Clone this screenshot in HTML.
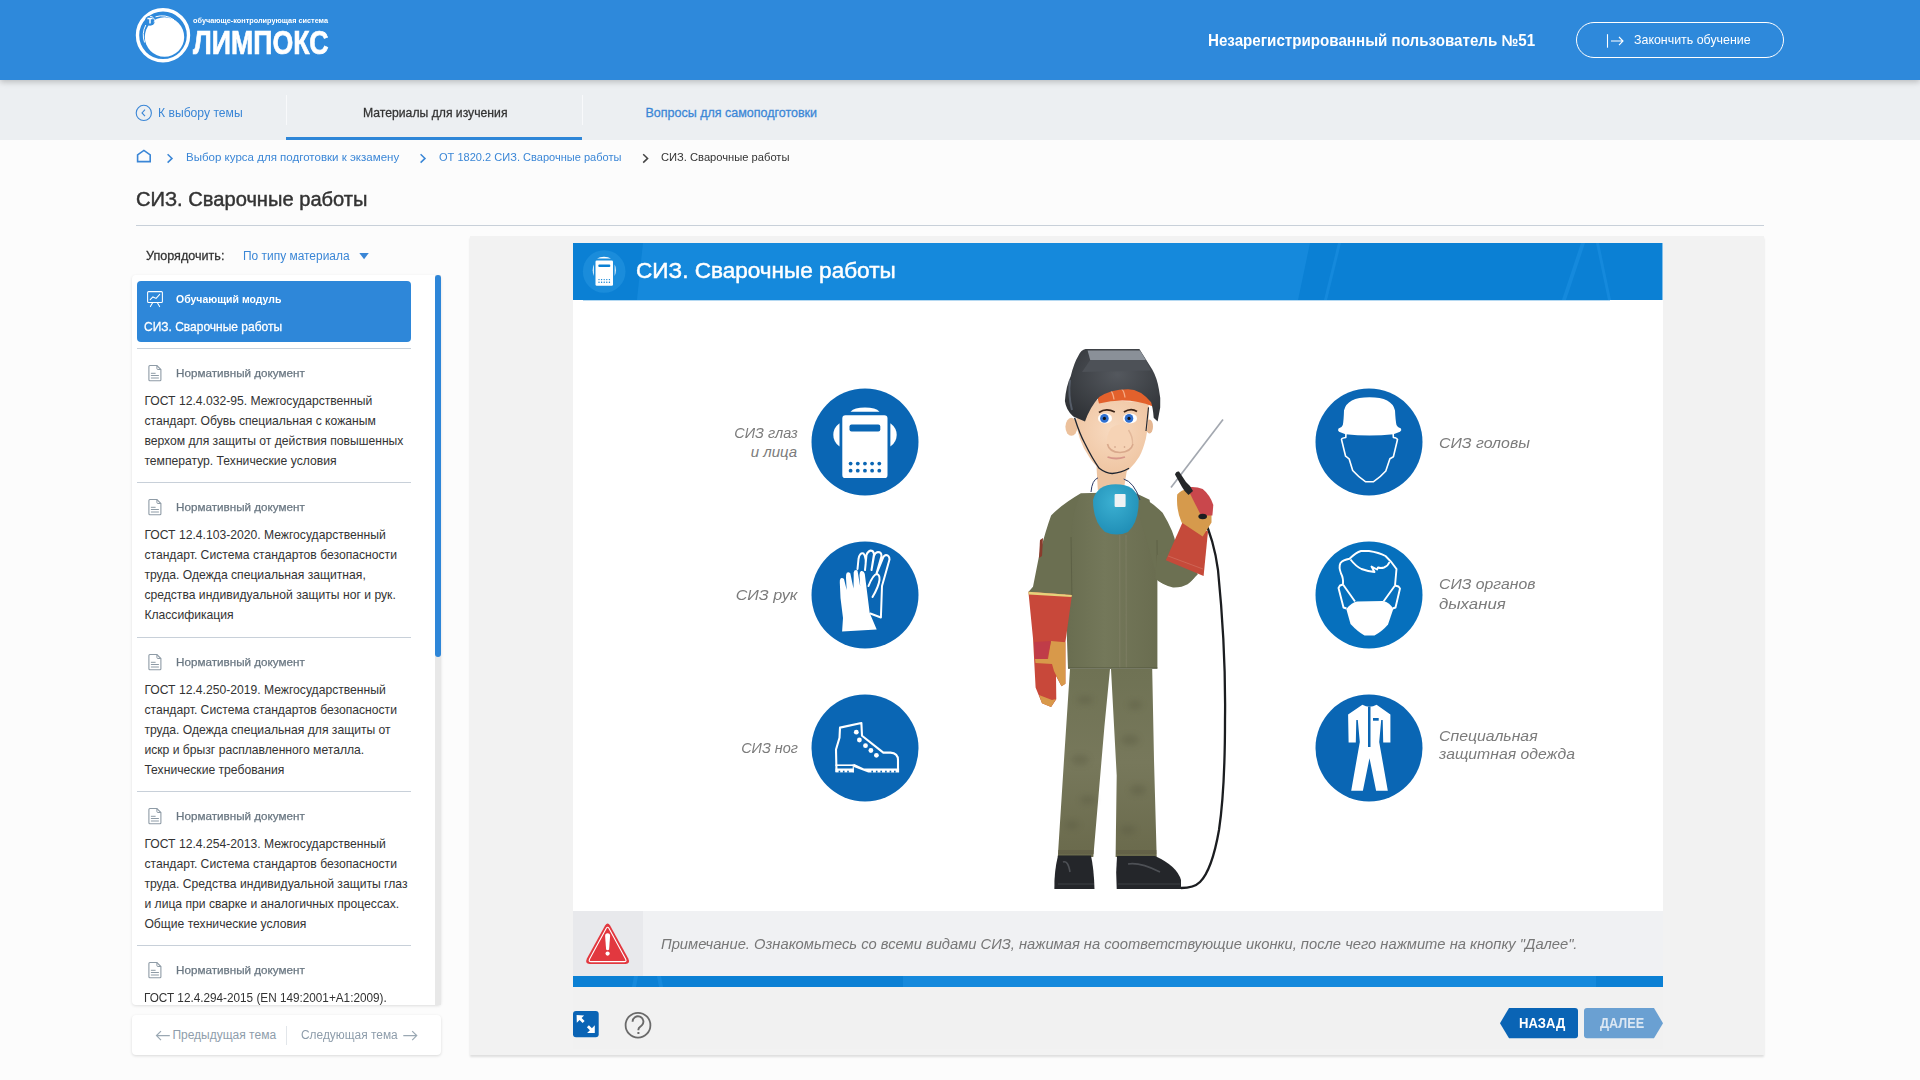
<!DOCTYPE html>
<html><head><meta charset="utf-8"><title>СИЗ. Сварочные работы</title>
<style>
html,body{margin:0;padding:0;}
body{width:1920px;height:1080px;position:relative;overflow:hidden;background:#fcfcfc;font-family:"Liberation Sans",sans-serif;}
.t{position:absolute;white-space:nowrap;z-index:5;}
.a{position:absolute;}
svg{position:absolute;overflow:visible;}
</style></head><body>
<div class=a style="left:0px;top:0px;width:1920px;height:80px;background:#2e89db;box-shadow:0 2px 6px rgba(0,0,0,.22);z-index:2"></div>
<div class=a style="left:0px;top:80px;width:1920px;height:60px;background:#eceff2;"></div>
<div class=a style="left:286px;top:95px;width:1px;height:30px;background:#f8f9fb;"></div>
<div class=a style="left:582px;top:95px;width:1px;height:30px;background:#f8f9fb;"></div>
<div class=a style="left:286px;top:137px;width:296px;height:3px;background:#2e86d8;"></div>
<svg style="left:130px;top:0px;z-index:3" width="70" height="80" viewBox="130 0 70 80">
<circle cx="163" cy="35.3" r="25.5" fill="none" stroke="#fff" stroke-width="3.4"/>
<circle cx="164.5" cy="37" r="19.7" fill="#fff"/>
<path d="M144.6 42.5 A21.8 21.8 0 0 1 145.8 25" fill="none" stroke="#fff" stroke-width="1"/>
<path d="M155.5 16.8 A21.5 21.5 0 0 1 174 19.8" fill="none" stroke="#fff" stroke-width="1"/>
<circle cx="150" cy="20.8" r="5" fill="#2e89db"/>
<path d="M150 16.3 A4.5 4.5 0 0 1 154.2 22.5" fill="none" stroke="#fff" stroke-width=".9"/>
<path d="M147.4 18.4h5.2M150 18.4v5" stroke="#fff" stroke-width="1.5"/>
</svg>
<div class=a style="left:1576px;top:22px;width:206px;height:34px;border:1.3px solid #fff;border-radius:18px;z-index:3"></div>
<svg style="left:1600px;top:30px;z-index:3" width="30" height="20" viewBox="1600 30 30 20">
<path d="M1607.5 34.2v13.5" stroke="#fff" stroke-width="1.1"/>
<path d="M1611 41h12M1619 37l4 4-4 4.2" fill="none" stroke="#fff" stroke-width="1.1"/>
</svg>
<svg style="left:130px;top:100px" width="30" height="30" viewBox="130 100 30 30">
<circle cx="143.8" cy="112.9" r="7.6" fill="none" stroke="#3a86d6" stroke-width="1.1"/>
<path d="M145 109.6l-3 3.3 3 3.3" fill="none" stroke="#3a86d6" stroke-width="1.1"/>
</svg>
<svg style="left:130px;top:140px" width="540" height="30" viewBox="130 140 540 30">
<path d="M137.6 161.6v-6.8l6.3-4.4 6.3 4.4v6.8z" fill="none" stroke="#3a86d6" stroke-width="1.6" stroke-linejoin="miter"/>
<path d="M167.6 154.2l4.4 4.2-4.4 4.2" fill="none" stroke="#3a86d6" stroke-width="1.5"/>
<path d="M420.6 154.2l4.4 4.2-4.4 4.2" fill="none" stroke="#3a86d6" stroke-width="1.5"/>
<path d="M643.2 154.2l4.4 4.2-4.4 4.2" fill="none" stroke="#444" stroke-width="1.5"/>
</svg>
<div class=a style="left:136px;top:225px;width:1628px;height:1px;background:#c8d0d9;"></div>
<svg style="left:355px;top:250px" width="20" height="12" viewBox="355 250 20 12">
<path d="M359.3 252.9h9.5l-4.75 6.4z" fill="#3a86d6"/></svg>
<div class=a style="left:132px;top:275px;width:309px;height:730px;background:#fff;border-radius:4px;box-shadow:0 1px 3px rgba(0,0,0,.12)"></div>
<div class=a style="left:435px;top:275px;width:6px;height:730px;background:#e8e8e8;"></div>
<div class=a style="left:435px;top:275px;width:6px;height:382px;background:#2e86d8;border-radius:3px"></div>
<div class=a style="left:137px;top:281px;width:274px;height:61px;background:#2e87d9;border-radius:4px"></div>
<div class=a style="left:137px;top:348px;width:274px;height:1px;background:#c8d0d9;"></div>
<div class=a style="left:137px;top:482px;width:274px;height:1px;background:#c8d0d9;"></div>
<div class=a style="left:137px;top:637px;width:274px;height:1px;background:#c8d0d9;"></div>
<div class=a style="left:137px;top:791px;width:274px;height:1px;background:#c8d0d9;"></div>
<div class=a style="left:137px;top:945px;width:274px;height:1px;background:#c8d0d9;"></div>
<svg style="left:140px;top:285px" width="30" height="30" viewBox="140 285 30 30">
<rect x="147.6" y="291.6" width="14.8" height="10.9" rx="1" fill="none" stroke="#fff" stroke-width="1.05"/>
<path d="M150.2 299.7l2.7-2.8 3.2 1.5 3.6-4" fill="none" stroke="#fff" stroke-width="1.05" stroke-linecap="round"/>
<path d="M152.6 302.8l-2.2 3.8M157.4 302.8l2.2 3.8" stroke="#fff" stroke-width="1.05" stroke-linecap="round"/>
</svg>
<svg style="left:146px;top:363px" width="20" height="20" viewBox="146 363 20 20">
<path d="M149.9 365.5h7l4 4v10.2a1 1 0 0 1-1 1h-10a1 1 0 0 1-1-1v-13.2a1 1 0 0 1 1-1z" fill="none" stroke="#8e9ba6" stroke-width="1.1"/>
<path d="M156.9 365.5v3a1 1 0 0 0 1 1h3" fill="none" stroke="#8e9ba6" stroke-width="1"/>
<path d="M150.9 373.3h4.7M150.9 375.5h8M150.9 378h8" stroke="#8e9ba6" stroke-width="1"/>
</svg>
<svg style="left:146px;top:497px" width="20" height="20" viewBox="146 497 20 20">
<path d="M149.9 499.5h7l4 4v10.2a1 1 0 0 1-1 1h-10a1 1 0 0 1-1-1v-13.2a1 1 0 0 1 1-1z" fill="none" stroke="#8e9ba6" stroke-width="1.1"/>
<path d="M156.9 499.5v3a1 1 0 0 0 1 1h3" fill="none" stroke="#8e9ba6" stroke-width="1"/>
<path d="M150.9 507.3h4.7M150.9 509.5h8M150.9 512h8" stroke="#8e9ba6" stroke-width="1"/>
</svg>
<svg style="left:146px;top:652px" width="20" height="20" viewBox="146 652 20 20">
<path d="M149.9 654.5h7l4 4v10.2a1 1 0 0 1-1 1h-10a1 1 0 0 1-1-1v-13.2a1 1 0 0 1 1-1z" fill="none" stroke="#8e9ba6" stroke-width="1.1"/>
<path d="M156.9 654.5v3a1 1 0 0 0 1 1h3" fill="none" stroke="#8e9ba6" stroke-width="1"/>
<path d="M150.9 662.3h4.7M150.9 664.5h8M150.9 667h8" stroke="#8e9ba6" stroke-width="1"/>
</svg>
<svg style="left:146px;top:806px" width="20" height="20" viewBox="146 806 20 20">
<path d="M149.9 808.5h7l4 4v10.2a1 1 0 0 1-1 1h-10a1 1 0 0 1-1-1v-13.2a1 1 0 0 1 1-1z" fill="none" stroke="#8e9ba6" stroke-width="1.1"/>
<path d="M156.9 808.5v3a1 1 0 0 0 1 1h3" fill="none" stroke="#8e9ba6" stroke-width="1"/>
<path d="M150.9 816.3h4.7M150.9 818.5h8M150.9 821h8" stroke="#8e9ba6" stroke-width="1"/>
</svg>
<svg style="left:146px;top:960px" width="20" height="20" viewBox="146 960 20 20">
<path d="M149.9 962.5h7l4 4v10.2a1 1 0 0 1-1 1h-10a1 1 0 0 1-1-1v-13.2a1 1 0 0 1 1-1z" fill="none" stroke="#8e9ba6" stroke-width="1.1"/>
<path d="M156.9 962.5v3a1 1 0 0 0 1 1h3" fill="none" stroke="#8e9ba6" stroke-width="1"/>
<path d="M150.9 970.3h4.7M150.9 972.5h8M150.9 975h8" stroke="#8e9ba6" stroke-width="1"/>
</svg>
<div class=a style="left:132px;top:1015px;width:309px;height:40px;background:#fff;border-radius:4px;box-shadow:0 1px 3px rgba(0,0,0,.14)"></div>
<div class=a style="left:286px;top:1026px;width:1px;height:19px;background:#e2e6ea;"></div>
<svg style="left:150px;top:1025px" width="280" height="20" viewBox="150 1025 280 20">
<path d="M169.8 1035.6h-13.3M161 1031.1l-4.5 4.5 4.5 4.5" fill="none" stroke="#9aa8b3" stroke-width="1.2"/>
<path d="M403.3 1035.6h13.3M412.2 1031.1l4.5 4.5-4.5 4.5" fill="none" stroke="#9aa8b3" stroke-width="1.2"/>
</svg>
<div class=a style="left:470px;top:236px;width:1294px;height:819px;background:#f2f2f2;box-shadow:0 2px 2px rgba(0,0,0,.12)"></div>
<div class=a style="left:573px;top:243px;width:1090px;height:668px;background:#fff;"></div>
<svg style="left:573px;top:242px" width="1090" height="58" viewBox="573 242 1090 58">
<rect x="573" y="243" width="1089.5" height="57" fill="#0b80d4"/>
<path d="M643 243L1310 243L1298 300L637 300z" fill="#1589dc"/>
<path d="M1338 243l3 0-14 57-3 0z" fill="#1589dc"/>
<path d="M1581 243l4 0-19 57-4 0z" fill="#1589dc"/>
<path d="M1596 243l3 0 12 57-3 0z" fill="#1589dc"/>
<circle cx="604.2" cy="271.5" r="21.3" fill="#1a8cdb"/>
<g fill="#fff">
<path d="M597 258.5a9 5 0 0 1 14 0z"/>
<rect x="595.5" y="260.5" width="17.5" height="25.3" rx="1.3"/>
<path d="M593.8 264.5a3 7.5 0 0 0 0 11.5z"/>
<path d="M614.7 264.5a3 7.5 0 0 1 0 11.5z"/>
</g>
<rect x="598.3" y="264.5" width="12" height="2.6" rx="1" fill="#0b80d4"/>
<g fill="#0b80d4">
<circle cx="599" cy="279.6" r=".7"/><circle cx="601.6" cy="279.6" r=".7"/><circle cx="604.2" cy="279.6" r=".7"/><circle cx="606.8" cy="279.6" r=".7"/><circle cx="609.4" cy="279.6" r=".7"/>
<circle cx="599" cy="282.3" r=".7"/><circle cx="601.6" cy="282.3" r=".7"/><circle cx="604.2" cy="282.3" r=".7"/><circle cx="606.8" cy="282.3" r=".7"/><circle cx="609.4" cy="282.3" r=".7"/>
</g>
</svg>
<div class=a style="left:583px;top:300px;width:1027px;height:1px;background:#b5d9f2;"></div>
<div class=a style="left:573px;top:911px;width:1090px;height:65px;background:#f0f1f3;"></div>
<div class=a style="left:573px;top:911px;width:70px;height:65px;background:#e8e9ec;"></div>
<svg style="left:580px;top:915px" width="60" height="55" viewBox="580 915 60 55">
<path d="M605.1 925.4 Q607.6 921.6 610.1 925.4 L628.3 958.6 Q630.6 963.9 625.6 963.9 L589.6 963.9 Q584.6 963.9 586.9 958.6z" fill="#e2383f"/>
<path d="M606.3 928.2 Q607.6 926.2 608.9 928.2 L625.6 958.9 Q626.9 961.6 624.2 961.6 L591 961.6 Q588.3 961.6 589.6 958.9z" fill="none" stroke="#fff" stroke-width="1.1"/>
<path d="M610.1 936 Q610.1 933.2 607.6 933.2 Q605.1 933.2 605.1 936 L606.1 949.5 Q607.6 951 609.1 949.5z" fill="#fff"/>
<circle cx="607.6" cy="953.6" r="2.1" fill="#fff"/>
</svg>
<svg style="left:573px;top:976px" width="1090" height="11" viewBox="573 976 1090 11">
<rect x="573" y="976" width="1090" height="11" fill="#0b80d4"/>
<rect x="903" y="976" width="693" height="11" fill="#1589dc"/>
<path d="M634 976h4l-2 11h-4zM657 976h4l2 11h-4z" fill="#1589dc"/>
</svg>
<div class=a style="left:573px;top:987px;width:1090px;height:62px;background:#f1f1f1;"></div>
<svg style="left:573px;top:1011px" width="26" height="27" viewBox="573 1011 26 27">
<rect x="573" y="1011" width="25.7" height="26.2" rx="3" fill="#0a64b5"/>
<path d="M576.6 1015.1 L584.1 1015.5 L581.6 1018 L584.6 1021 L582.6 1023 L579.6 1020 L576.8 1022.8z" fill="#fff"/>
<path d="M594.8 1025.2 L594.8 1033.1 L587.1 1032.9 L589.9 1030.3 L586.9 1027.3 L588.9 1025.3 L591.9 1028.3z" fill="#fff"/>
</svg>
<svg style="left:620px;top:1008px" width="36" height="36" viewBox="620 1008 36 36">
<circle cx="638" cy="1025.2" r="12.4" fill="none" stroke="#6a6a6a" stroke-width="1.8"/>
<path d="M632.6 1021.8 a5.4 5.3 0 1 1 9.2 3.6 c-1.5 1.4 -3.4 1.9 -3.4 4 v0.8" fill="none" stroke="#6a6a6a" stroke-width="1.9"/>
<rect x="637.4" y="1032" width="2" height="2" fill="#6a6a6a"/>
</svg>
<svg style="left:1495px;top:1004px" width="175" height="40" viewBox="1495 1004 175 40">
<path d="M1509 1008 H1575 Q1578 1008 1578 1011 V1035.3 Q1578 1038.3 1575 1038.3 H1509 L1500 1023.2z" fill="#0a64b5"/>
<path d="M1587 1008 H1654 L1663 1023.2 L1654 1038.3 H1587 Q1584 1038.3 1584 1035.3 V1011 Q1584 1008 1587 1008z" fill="#6aa0d2"/>
</svg>
<svg style="left:810px;top:386.5px" width="110" height="110" viewBox="0 0 110 110"><circle cx="55" cy="55" r="53.5" fill="#0a66b4"/><g fill="#fff">
<path d="M40.5 24.8a15.5 6.5 0 0 1 29 0z"/>
<rect x="32.3" y="28.2" width="45.2" height="62.9" rx="3.2"/>
<path d="M29.5 36.3 Q23.3 41 23.3 48 Q23.3 55 29.5 59.6z"/>
<path d="M80.4 36.3 Q86.7 41 86.7 48 Q86.7 55 80.4 59.6z"/>
</g>
<rect x="39.5" y="37.4" width="30.8" height="7" rx="2" fill="#0a66b4"/>
<g fill="#0a66b4"><circle cx="40.60" cy="76.6" r="1.9"/><circle cx="40.60" cy="83.7" r="1.9"/><circle cx="47.77" cy="76.6" r="1.9"/><circle cx="47.77" cy="83.7" r="1.9"/><circle cx="54.94" cy="76.6" r="1.9"/><circle cx="54.94" cy="83.7" r="1.9"/><circle cx="62.11" cy="76.6" r="1.9"/><circle cx="62.11" cy="83.7" r="1.9"/><circle cx="69.28" cy="76.6" r="1.9"/><circle cx="69.28" cy="83.7" r="1.9"/></g></svg>
<svg style="left:810px;top:539.5px" width="110" height="110" viewBox="0 0 110 110"><circle cx="55" cy="55" r="53.5" fill="#0a66b4"/><g fill="none" stroke="#fff" stroke-width="2" stroke-linejoin="round" stroke-linecap="round">
<path d="M60.3 73.5 L70.9 77.5 L72 46 L79.5 19.5 Q79.5 15.5 76 15 Q73.5 15.5 72.5 19 L66.5 33.5 M66.5 33.5 L71.5 16 Q71.5 12 68 12 Q65 12.5 64 16 L61.5 30 M61.5 30 L64 14 Q63.5 10.5 60.5 10.5 Q57.5 11.5 56.5 15 L55 30 M55 30 Q57 17 53.5 13.5 Q49.5 12.5 48.5 19 L47.5 29"/>
<path d="M58.5 46 Q63 34.5 67 34 Q70 35 69.5 40 Q68.5 47 62.5 57"/>
</g>
<path d="M32.1 91.6 L66.7 89.6 L59.7 73 L54.8 34 Q53.8 30.5 51 31 Q49.5 32 49.5 35 L50.2 46.5 L47.5 30.5 Q46 29.5 44.5 30.5 Q43.3 32 43.7 35 L43.5 48.5 L40.3 33.3 Q38.5 31.5 36.8 32.7 Q35.8 34 36 38 L36.7 50 L34 39 Q32.5 37.5 30.8 38.3 Q29.5 39.5 29.8 42.5 L30.5 58 L33 78 z" fill="#fff"/></svg>
<svg style="left:810px;top:692.5px" width="110" height="110" viewBox="0 0 110 110"><circle cx="55" cy="55" r="53.5" fill="#0a66b4"/><g fill="none" stroke="#fff" stroke-width="2.1" stroke-linejoin="round">
<path d="M26.5 79 L26 56.5 L29.5 44.8 L30 34.6 L51.4 30 L52 42.8 L73.3 59.6 L80.4 59.6 Q88 60 88 67.2 L88 77"/>
</g>
<g fill="#fff">
<rect x="25.5" y="71.4" width="18.3" height="1.6"/>
<rect x="42.7" y="71.4" width="1.1" height="8"/>
<rect x="25.5" y="75.5" width="18.3" height="3.9"/>
<path d="M43.8 70.8 L54 75.5 L89.1 75.5 L89.1 79.4 L58.3 79.4 L43.8 73.9z"/>
<circle cx="46.3" cy="39.2" r="2.4"/><circle cx="49.4" cy="47" r="2.4"/><circle cx="55.5" cy="52.7" r="2.4"/><circle cx="60.9" cy="57.5" r="2.4"/><circle cx="66.4" cy="62.3" r="2.4"/>
</g>
<g fill="#0a66b4"><rect x="28.6" y="77.7" width="1.6" height="1.9"/><rect x="32.9" y="77.7" width="1.6" height="1.9"/><rect x="37.2" y="77.7" width="1.6" height="1.9"/><rect x="61.4" y="77.7" width="1.6" height="1.9"/><rect x="65.9" y="77.7" width="1.6" height="1.9"/><rect x="70.4" y="77.7" width="1.6" height="1.9"/><rect x="75.1" y="77.7" width="1.6" height="1.9"/><rect x="79.6" y="77.7" width="1.6" height="1.9"/><rect x="84.0" y="77.7" width="1.6" height="1.9"/></g></svg>
<svg style="left:1314px;top:386.5px" width="110" height="110" viewBox="0 0 110 110"><circle cx="55" cy="55" r="53.5" fill="#0a66b4"/><path d="M30 23.4 Q33 10.2 55.5 10.2 Q78 10.2 81 23.4 Q81.5 33.6 82.5 38 Q83.5 40.7 87 41.5 Q88 43.5 86 44.8 L79.5 47.2 Q55.5 49.8 31.5 47.2 L25 44.8 Q23.3 43.5 24.5 41.5 Q28 40.7 28.8 38 Q29.7 33.6 30 23.4z" fill="#fff"/>
<path d="M32 44.8 L31.8 50.5 Q27.5 51 27.5 52.5 L31.6 69.2 L35.1 71.8 L38.7 83.5 Q45 90.5 51.4 94.7 L59.6 94.7 Q66 90.5 71.8 84 L75.9 71.8 L79.4 69.8 L83.5 52.5 Q83 51 79.4 50.5 L79 44.8" fill="none" stroke="#fff" stroke-width="1.6" stroke-linejoin="round"/></svg>
<svg style="left:1314px;top:539.5px" width="110" height="110" viewBox="0 0 110 110"><circle cx="55" cy="55" r="53.5" fill="#0670bd"/><g fill="none" stroke="#fff" stroke-width="1.9" stroke-linejoin="round">
<path d="M29 44.5 Q29.5 38 27 33.5 Q24.5 27 26.5 23 Q29 20 35.5 18.8 Q42 12.5 47 11 L55 11 Q65 12.5 71.5 16 Q77.5 21.5 82.5 29 L81 45.5"/>
<path d="M36.5 19.5 Q42 26.5 47.5 29 Q54.5 31.5 60.5 32 L57.5 26.5 L63 29.5 L64 27.5 Q67 28.5 70 27.5 Q74 26 75.5 22"/>
<path d="M29 44.5 L26 45.5 L24.5 48 L29.5 67.5 L32.5 68.5 M29 44.5 L41 61.5"/>
<path d="M81 45.5 L84.5 46.5 L86 48.5 L81.5 67.5 L78.5 68.5 M81 45.5 L69.5 61.5"/>
</g>
<path d="M32.3 69 Q38 62 43 61.5 L69 61 Q76 62.5 79.3 69 L74 84.5 Q68 91.5 60.5 95.5 L50.5 95.5 Q44 92 36.5 84 z" fill="#fff"/></svg>
<svg style="left:1314px;top:692.5px" width="110" height="110" viewBox="0 0 110 110"><circle cx="55" cy="55" r="53.5" fill="#0a66b4"/><path d="M48.4 11.7 Q55.5 16 62.6 11.7 L76.4 21.4 L76.4 49.4 L69.2 49.4 L68.7 27 L67.2 27 L65.2 48.9 L73.8 97.8 L62.1 97.8 L55.5 65.2 L48.9 97.8 L37.2 97.8 L45.8 48.9 L43.8 27 L42.3 27 L41.8 49.4 L34.6 49.4 L34.1 21.4 z" fill="#fff"/>
<rect x="54" y="13.7" width="2.5" height="40.3" fill="#0a66b4"/>
<rect x="59" y="25" width="5.7" height="2.7" fill="#0a66b4"/></svg>
<svg style="left:1000px;top:330px" width="260" height="580" viewBox="1000 330 260 580">
<defs>
<linearGradient id="wj" x1="0" y1="0" x2="1" y2="0">
<stop offset="0" stop-color="#686c4f"/><stop offset=".45" stop-color="#74785a"/><stop offset="1" stop-color="#6a6d50"/>
</linearGradient>
<linearGradient id="wp" x1="0" y1="0" x2="0" y2="1">
<stop offset="0" stop-color="#6f7254"/><stop offset=".5" stop-color="#77785b"/><stop offset="1" stop-color="#6a6a4c"/>
</linearGradient>
<radialGradient id="wh" cx=".55" cy=".35" r=".7">
<stop offset="0" stop-color="#54585e"/><stop offset="1" stop-color="#2f3236"/>
</radialGradient>
<radialGradient id="wm" cx=".45" cy=".35" r=".7">
<stop offset="0" stop-color="#3bb0d2"/><stop offset="1" stop-color="#1f8db5"/>
</radialGradient>
<radialGradient id="wf" cx=".5" cy=".4" r=".65">
<stop offset="0" stop-color="#f8dac0"/><stop offset="1" stop-color="#eec39f"/>
</radialGradient>
<filter id="blur3" x="-50%" y="-50%" width="200%" height="200%"><feGaussianBlur stdDeviation="3"/></filter>
</defs>
<!-- cable -->
<path d="M1203 517 Q1214 540 1218 570 Q1226 650 1225 720 Q1225 790 1219 830 Q1212 870 1200 882 Q1194 888 1181 888" fill="none" stroke="#1b1d20" stroke-width="2.3"/>
<!-- rod -->
<path d="M1171 487.5 L1223 419.5" stroke="#a3a8b0" stroke-width="1.7"/>
<!-- legs -->
<path d="M1070 669 L1110 669 L1104.4 726.7 L1093.3 857 L1057.8 857 L1064 760z" fill="url(#wp)"/>
<path d="M1111 669 L1152.2 669 L1154 760 L1156.7 857 L1115.6 857 L1116.7 775.6z" fill="url(#wp)"/>
<path d="M1058 852 L1093.8 852 M1116 852 L1156.5 852" stroke="#5e5a44" stroke-width="4" opacity=".5"/>
<g opacity=".3" fill="#4f5038" filter="url(#blur3)">
<ellipse cx="1080" cy="760" rx="9" ry="5"/><ellipse cx="1088" cy="800" rx="8" ry="4"/><ellipse cx="1072" cy="825" rx="7" ry="4"/>
<ellipse cx="1130" cy="740" rx="9" ry="5"/><ellipse cx="1138" cy="790" rx="8" ry="5"/><ellipse cx="1128" cy="830" rx="8" ry="4"/>
<ellipse cx="1085" cy="700" rx="8" ry="4"/><ellipse cx="1135" cy="705" rx="7" ry="4"/>
</g>
<!-- shoes -->
<path d="M1058 855.5 L1091 855.5 Q1094 870 1094.5 889 L1054.4 889 Q1054 872 1058 855.5z" fill="#24262a"/>
<path d="M1117 856 L1155 856 Q1177 866 1181 880 L1181 889 L1116.7 889 Q1115.5 872 1117 856z" fill="#24262a"/>
<path d="M1058 884 L1094 884 M1118 884 L1180 884" stroke="#3d4045" stroke-width="1"/>
<path d="M1063 862 Q1068 860 1070 872 M1128 864 Q1140 862 1160 872" stroke="#5f6368" stroke-width="1.6" fill="none" opacity=".7"/>
<!-- jacket: torso -->
<path d="M1080.9 493.3 L1132.8 492 Q1142 496 1149.6 499.8 L1157.4 579 L1157.4 668.2 L1068 668.2 L1065.4 595 L1065.4 580 L1062 535 Q1070 505 1080.9 493.3z" fill="url(#wj)"/>
<!-- left arm -->
<path d="M1080.9 493.3 Q1062.8 503.7 1051.1 515.4 Q1045.9 529.6 1039.4 554.3 L1033 586.7 L1028.4 592 L1071.9 594.9 L1071 537 Q1072 510 1080.9 493.3z" fill="#6b6f51"/>
<!-- right arm -->
<path d="M1132.8 492 Q1149.6 499.8 1162.6 512.8 Q1174.3 532.2 1176 545 L1169 571 Q1182 577 1196 574 Q1190 588 1173 587.5 Q1162 585 1157.4 579z" fill="#6c7052"/>
<path d="M1040 540 L1043 538 L1042 556 L1039 558z" fill="#8a3b2c"/>
<path d="M1071 537 L1071.9 594.9" stroke="#55583f" stroke-width="1" opacity=".6"/>
<path d="M1157 540 L1157.4 579" stroke="#55583f" stroke-width="1" opacity=".6"/>
<!-- placket -->
<path d="M1119.8 535 L1119.8 668 M1126 535 L1126.3 668" stroke="#8e8a74" stroke-width=".7" opacity=".6"/>
<path d="M1068 668.2 L1157.4 668.2" stroke="#55583f" stroke-width="1.3"/>
<!-- neck -->
<path d="M1096.5 466 L1127.6 466 L1123.7 490 L1097.8 490z" fill="#ecc3a0"/>
<!-- respirator straps -->
<path d="M1091 492 Q1092 480 1098 477.8 M1140 500 Q1134 482 1123.7 479" fill="none" stroke="#2d3a66" stroke-width="1"/>
<!-- respirator -->
<path d="M1093 500 Q1097 484.5 1115.6 484.3 Q1136 484.5 1138.6 500 Q1139 522 1128 532 Q1117 537 1105 532 Q1093 522 1093 500z" fill="url(#wm)"/>
<rect x="1114.6" y="494" width="11" height="13" fill="#eef2f4" rx="1"/>
<!-- left glove -->
<path d="M1028.4 591.7 L1071.9 594.9 L1065.4 642.2 L1065.4 683.7 L1061.5 686.3 L1056 676 L1056.3 699.3 L1051.1 707 L1042 703.2 L1035.6 687.6 L1033 638.3z" fill="#c8483a"/>
<path d="M1028.4 591.7 L1071.9 594.9 L1071.5 597 L1028.6 594.5z" fill="#e6d27a"/>
<path d="M1051 641 L1065.4 642.2 L1065.4 683.7 L1061.5 686.3 L1054 671 L1052 664 L1035.5 663 L1035 659 L1048 659z" fill="#d8994a"/>
<path d="M1039 695 L1052 700 L1056 699 L1051.1 707 L1042 703.2z" fill="#d8994a"/>
<path d="M1034 642 L1051 641 L1047 659 L1035 659z" fill="#c03c48"/>
<path d="M1157 555 L1172 548 L1198 574 Q1190 585 1172 586 Q1160 584 1155 578z" fill="#6c7052"/>
<!-- right glove gauntlet -->
<path d="M1182.5 522.5 L1208 531.3 L1203.6 576.1 L1165.8 560.3z" fill="#c54a3a"/>
<path d="M1168 556 L1203 569" stroke="#d98a7a" stroke-width=".6" opacity=".7"/>
<!-- hand -->
<path d="M1177.2 494.4 Q1181 490 1188 489 L1201 508 L1211.5 511 L1211.5 522.5 L1202.7 536.6 L1181.6 522.5 Q1176 510 1177.2 494.4z" fill="#d69a4c"/>
<path d="M1187 487.3 Q1196 486 1202.7 489.1 Q1210 495 1213.3 505 L1212.4 515.5 L1201 515.5 L1192.2 498z" fill="#c9474c"/>
<!-- torch handle -->
<path d="M1175 474.5 Q1176 471 1179 471.5 L1186 482 Q1191 486 1193 491 L1188.5 495 Q1184 491 1182 487z" fill="#242628"/>
<ellipse cx="1202.7" cy="516.5" rx="4.3" ry="2.8" fill="#1b1d20"/>
<!-- ears -->
<ellipse cx="1071.4" cy="426.8" rx="6" ry="9" fill="#ecc19c"/>
<ellipse cx="1149.5" cy="426.5" rx="3.5" ry="7" fill="#e5b792"/>
<!-- face -->
<path d="M1096.7 400 L1148.5 402 Q1149.5 412 1148.5 420.4 Q1147.5 430 1145.9 438.5 Q1143 450 1139.4 456.6 Q1135 464 1129 469.6 Q1122 474.8 1117.4 474.8 Q1108 474 1101.8 470.9 Q1094 465 1088.9 456.6 Q1083 448 1079.8 438.5 Q1076.5 428 1075.9 420.4 Q1080 405 1096.7 400z" fill="url(#wf)"/>
<!-- eyebrows -->
<path d="M1099 412.5 Q1106 407.5 1114.8 412" fill="none" stroke="#3b2417" stroke-width="1.8"/>
<path d="M1123.9 412 Q1131 407.5 1137 411.5" fill="none" stroke="#3b2417" stroke-width="1.8"/>
<!-- eyes -->
<ellipse cx="1105" cy="418.4" rx="7" ry="5" fill="#fff"/><circle cx="1104.4" cy="418.4" r="4.3" fill="#2f6fcf"/><circle cx="1104.4" cy="418.4" r="1.6" fill="#111"/>
<ellipse cx="1130" cy="418.4" rx="7" ry="5" fill="#fff"/><circle cx="1129" cy="418.4" r="4.3" fill="#2f6fcf"/><circle cx="1129" cy="418.4" r="1.6" fill="#111"/>
<!-- nose -->
<path d="M1111 428 Q1120 421 1128 428 Q1134 437 1133 446 Q1131 452 1120 452 Q1108 452 1107 446 Q1106 436 1111 428z" fill="#f6d3b5"/>
<path d="M1107.5 444 Q1109 452 1120 452.5 Q1131 452 1133 444" fill="none" stroke="#d9a98c" stroke-width="1.6"/>
<path d="M1128.5 430 Q1133 437 1132.5 444" fill="none" stroke="#e2b89a" stroke-width="1.4"/>
<circle cx="1115" cy="447" r=".8" fill="#c99a80"/><circle cx="1124.5" cy="447" r=".8" fill="#c99a80"/>
<!-- mouth -->
<path d="M1107.5 457 Q1116 460 1125 457" fill="none" stroke="#d7978a" stroke-width="1.8"/>
<!-- strap -->
<path d="M1074.6 417.8 Q1080 435 1085 443.7 Q1092 458 1099.2 468.3 Q1106 473.5 1112.2 473.5 Q1121 473 1129 468.3" fill="none" stroke="#1e2530" stroke-width="1.3"/>
<path d="M1148.5 407.4 L1146 431" fill="none" stroke="#1e2530" stroke-width="1.1"/>
<!-- orange cap band -->
<path d="M1096 392 Q1127 378 1154 396 L1153 406.5 Q1128 396.5 1099 403.5z" fill="#e3612c"/>
<path d="M1110 390 Q1113 392 1114 399.5 M1121 388.5 Q1124 390 1125 397.5" stroke="#f5ab85" stroke-width="1.3" fill="none"/>
<!-- welding helmet -->
<path d="M1085.6 349.1 L1139.4 349.1 L1152.4 369.8 Q1157 378 1158.9 389.2 Q1161 398 1160.2 407.4 L1157.6 421.6 L1153.7 417.8 Q1153 408 1151.1 402.2 Q1140 389 1127.8 389.2 Q1110 389.5 1099.2 397 Q1090 407 1085 421.6 L1073.3 416.5 Q1066 410 1064.9 400.9 Q1066 386 1070.7 376.3 Q1074 363 1078.5 355.6 Q1081 350 1085.6 349.1z" fill="url(#wh)"/>
<path d="M1087.6 350.5 L1140 350.5 L1145.9 360 L1090.2 360z" fill="#8a9098"/>
<path d="M1090.2 360 L1145.9 360 L1151 370.5 L1082 372z" fill="#4d5157"/>
<path d="M1070 380 Q1068 395 1072 410" stroke="#6c7787" stroke-width="2" fill="none" opacity=".6"/>
</svg>
<div class=t style="top:33px;font-size:16px;line-height:16px;color:#fff;font-weight:700;left:1207.80px;transform:scaleX(0.9466);transform-origin:0 0;">Незарегистрированный пользователь №51</div>
<div class=t style="top:33px;font-size:13px;line-height:13px;color:#fff;left:1634.00px;transform:scaleX(0.9537);transform-origin:0 0;">Закончить обучение</div>
<div class=t style="top:17px;font-size:7.6px;line-height:7.6px;color:#fff;font-weight:700;left:193.00px;transform:scaleX(0.9631);transform-origin:0 0;">обучающе-контролирующая система</div>
<div class=t style="top:26px;font-size:33px;line-height:33px;color:#fff;font-weight:700;left:192.50px;transform:scaleX(0.8099);transform-origin:0 0;-webkit-text-stroke:0.7px #fff;">ЛИМПОКС</div>
<div class=t style="top:107px;font-size:12.3px;line-height:12.3px;color:#3a86d6;left:157.60px;transform:scaleX(0.9879);transform-origin:0 0;">К выбору темы</div>
<div class=t style="top:107px;font-size:12.5px;line-height:12.5px;color:#333;-webkit-text-stroke:0.27px #333;left:362.50px;transform:scaleX(0.9751);transform-origin:0 0;">Материалы для изучения</div>
<div class=t style="top:107px;font-size:12.5px;line-height:12.5px;color:#3a86d6;-webkit-text-stroke:0.27px #3a86d6;left:645.50px;">Вопросы для самоподготовки</div>
<div class=t style="top:152px;font-size:11.4px;line-height:11.4px;color:#3a86d6;left:185.50px;transform:scaleX(1.0122);transform-origin:0 0;">Выбор курса для подготовки к экзамену</div>
<div class=t style="top:152px;font-size:11.4px;line-height:11.4px;color:#3a86d6;left:438.70px;transform:scaleX(0.9702);transform-origin:0 0;">ОТ 1820.2 СИЗ. Сварочные работы</div>
<div class=t style="top:152px;font-size:11.4px;line-height:11.4px;color:#333;left:661.00px;transform:scaleX(0.9800);transform-origin:0 0;">СИЗ. Сварочные работы</div>
<div class=t style="top:190px;font-size:19.5px;line-height:19.5px;color:#333;-webkit-text-stroke:0.43px #333;left:136.40px;transform:scaleX(1.0313);transform-origin:0 0;">СИЗ. Сварочные работы</div>
<div class=t style="top:250px;font-size:12.5px;line-height:12.5px;color:#333;-webkit-text-stroke:0.27px #333;left:146.40px;transform:scaleX(1.0069);transform-origin:0 0;">Упорядочить:</div>
<div class=t style="top:250px;font-size:12.5px;line-height:12.5px;color:#3a86d6;left:243.00px;transform:scaleX(0.9555);transform-origin:0 0;">По типу материала</div>
<div class=t style="top:294px;font-size:11.5px;line-height:11.5px;color:#fff;font-weight:700;left:175.60px;transform:scaleX(0.9124);transform-origin:0 0;">Обучающий модуль</div>
<div class=t style="top:321px;font-size:12.5px;line-height:12.5px;color:#fff;-webkit-text-stroke:0.27px #fff;left:144.20px;transform:scaleX(0.9591);transform-origin:0 0;">СИЗ. Сварочные работы</div>
<div class=t style="top:368px;font-size:11.2px;line-height:11.2px;color:#6a7782;-webkit-text-stroke:0.25px #6a7782;left:175.80px;transform:scaleX(1.0425);transform-origin:0 0;">Нормативный документ</div>
<div class=t style="top:395px;font-size:12.15px;line-height:12.15px;color:#333;left:144.40px;">ГОСТ 12.4.032-95. Межгосударственный</div>
<div class=t style="top:415px;font-size:12.15px;line-height:12.15px;color:#333;left:144.40px;">стандарт. Обувь специальная с кожаным</div>
<div class=t style="top:435px;font-size:12.15px;line-height:12.15px;color:#333;left:144.40px;">верхом для защиты от действия повышенных</div>
<div class=t style="top:455px;font-size:12.15px;line-height:12.15px;color:#333;left:144.40px;">температур. Технические условия</div>
<div class=t style="top:502px;font-size:11.2px;line-height:11.2px;color:#6a7782;-webkit-text-stroke:0.25px #6a7782;left:175.80px;transform:scaleX(1.0425);transform-origin:0 0;">Нормативный документ</div>
<div class=t style="top:529px;font-size:12.15px;line-height:12.15px;color:#333;left:144.40px;">ГОСТ 12.4.103-2020. Межгосударственный</div>
<div class=t style="top:549px;font-size:12.15px;line-height:12.15px;color:#333;left:144.40px;">стандарт. Система стандартов безопасности</div>
<div class=t style="top:569px;font-size:12.15px;line-height:12.15px;color:#333;left:144.40px;">труда. Одежда специальная защитная,</div>
<div class=t style="top:589px;font-size:12.15px;line-height:12.15px;color:#333;left:144.40px;">средства индивидуальной защиты ног и рук.</div>
<div class=t style="top:609px;font-size:12.15px;line-height:12.15px;color:#333;left:144.40px;">Классификация</div>
<div class=t style="top:657px;font-size:11.2px;line-height:11.2px;color:#6a7782;-webkit-text-stroke:0.25px #6a7782;left:175.80px;transform:scaleX(1.0425);transform-origin:0 0;">Нормативный документ</div>
<div class=t style="top:684px;font-size:12.15px;line-height:12.15px;color:#333;left:144.40px;">ГОСТ 12.4.250-2019. Межгосударственный</div>
<div class=t style="top:704px;font-size:12.15px;line-height:12.15px;color:#333;left:144.40px;">стандарт. Система стандартов безопасности</div>
<div class=t style="top:724px;font-size:12.15px;line-height:12.15px;color:#333;left:144.40px;">труда. Одежда специальная для защиты от</div>
<div class=t style="top:744px;font-size:12.15px;line-height:12.15px;color:#333;left:144.40px;">искр и брызг расплавленного металла.</div>
<div class=t style="top:764px;font-size:12.15px;line-height:12.15px;color:#333;left:144.40px;">Технические требования</div>
<div class=t style="top:811px;font-size:11.2px;line-height:11.2px;color:#6a7782;-webkit-text-stroke:0.25px #6a7782;left:175.80px;transform:scaleX(1.0425);transform-origin:0 0;">Нормативный документ</div>
<div class=t style="top:838px;font-size:12.15px;line-height:12.15px;color:#333;left:144.40px;">ГОСТ 12.4.254-2013. Межгосударственный</div>
<div class=t style="top:858px;font-size:12.15px;line-height:12.15px;color:#333;left:144.40px;">стандарт. Система стандартов безопасности</div>
<div class=t style="top:878px;font-size:12.15px;line-height:12.15px;color:#333;left:144.40px;">труда. Средства индивидуальной защиты глаз</div>
<div class=t style="top:898px;font-size:12.15px;line-height:12.15px;color:#333;left:144.40px;">и лица при сварке и аналогичных процессах.</div>
<div class=t style="top:918px;font-size:12.15px;line-height:12.15px;color:#333;left:144.40px;">Общие технические условия</div>
<div class=t style="top:965px;font-size:11.2px;line-height:11.2px;color:#6a7782;-webkit-text-stroke:0.25px #6a7782;left:175.80px;transform:scaleX(1.0425);transform-origin:0 0;">Нормативный документ</div>
<div class=t style="top:992px;font-size:12.15px;line-height:12.15px;color:#333;left:144.40px;transform:scaleX(0.9676);transform-origin:0 0;">ГОСТ 12.4.294-2015 (EN 149:2001+A1:2009).</div>
<div class=t style="top:1029px;font-size:12px;line-height:12px;color:#8e9dab;left:172.40px;">Предыдущая тема</div>
<div class=t style="top:1029px;font-size:12px;line-height:12px;color:#8e9dab;left:300.50px;transform:scaleX(0.9926);transform-origin:0 0;">Следующая тема</div>
<div class=t style="top:260px;font-size:22px;line-height:22px;color:#fff;-webkit-text-stroke:0.48px #fff;left:636.00px;transform:scaleX(1.0255);transform-origin:0 0;">СИЗ. Сварочные работы</div>
<div class=t style="top:425px;font-size:15px;line-height:15px;color:#7b7b7b;font-style:italic;right:1122.80px;transform:scaleX(0.9646);transform-origin:100% 0;">СИЗ глаз</div>
<div class=t style="top:444px;font-size:15px;line-height:15px;color:#7b7b7b;font-style:italic;right:1122.80px;">и лица</div>
<div class=t style="top:587px;font-size:15px;line-height:15px;color:#7b7b7b;font-style:italic;right:1122.80px;transform:scaleX(1.0754);transform-origin:100% 0;">СИЗ рук</div>
<div class=t style="top:740px;font-size:15px;line-height:15px;color:#7b7b7b;font-style:italic;right:1122.20px;transform:scaleX(0.9637);transform-origin:100% 0;">СИЗ ног</div>
<div class=t style="top:435px;font-size:15px;line-height:15px;color:#7b7b7b;font-style:italic;left:1439.30px;transform:scaleX(1.0587);transform-origin:0 0;">СИЗ головы</div>
<div class=t style="top:576px;font-size:15px;line-height:15px;color:#7b7b7b;font-style:italic;left:1439.40px;transform:scaleX(1.0521);transform-origin:0 0;">СИЗ органов</div>
<div class=t style="top:596px;font-size:15px;line-height:15px;color:#7b7b7b;font-style:italic;left:1439.40px;transform:scaleX(1.1187);transform-origin:0 0;">дыхания</div>
<div class=t style="top:728px;font-size:15px;line-height:15px;color:#7b7b7b;font-style:italic;left:1439.40px;transform:scaleX(1.0547);transform-origin:0 0;">Специальная</div>
<div class=t style="top:746px;font-size:15px;line-height:15px;color:#7b7b7b;font-style:italic;left:1439.40px;transform:scaleX(1.0511);transform-origin:0 0;">защитная одежда</div>
<div class=t style="top:936px;font-size:15px;line-height:15px;color:#777;font-style:italic;left:660.50px;transform:scaleX(0.9822);transform-origin:0 0;">Примечание. Ознакомьтесь со всеми видами СИЗ, нажимая на соответствующие иконки, после чего нажмите на кнопку "Далее".</div>
<div class=t style="top:1016px;font-size:14px;line-height:14px;color:#fff;font-weight:700;left:1518.70px;transform:scaleX(0.9333);transform-origin:0 0;">НАЗАД</div>
<div class=t style="top:1016px;font-size:14px;line-height:14px;color:#dbe7f3;font-weight:700;left:1600.00px;transform:scaleX(0.9064);transform-origin:0 0;">ДАЛЕЕ</div>

</body></html>
